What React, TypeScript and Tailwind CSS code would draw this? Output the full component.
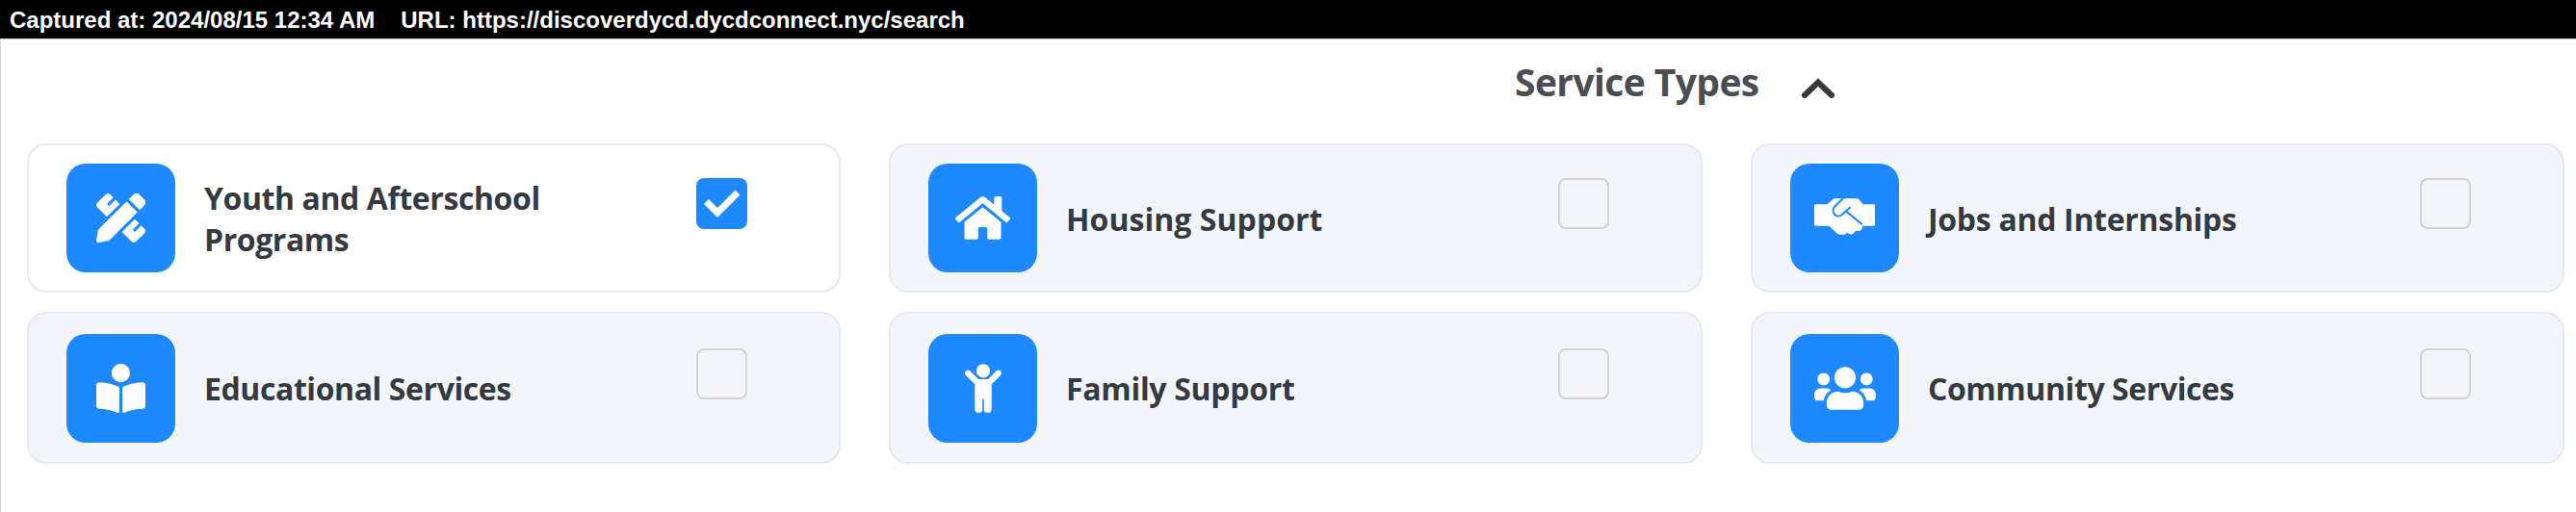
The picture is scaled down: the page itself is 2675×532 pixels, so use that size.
import { useState, type ReactNode } from 'react';
import { FaBookReader, FaChild, FaHome, FaPencilRuler, FaUsers } from 'react-icons/fa';

interface ServiceType {
    id: string;
    label: string;
    icon: ReactNode;
    tracking: string;
}

function Handshake() {
    return (
        <svg viewBox="42 80 190 113" className="mb-[3px] h-[38px] w-[63px]">
            <path
                fill="currentColor"
                d="M46 98H83L100 82Q102 80 105 80H175Q179 80 182 83L195 98H228Q232 98 232 102V162Q232 166 228 166H193Q193 182 178 182Q174 182 171 181Q166 193 156 192Q150 192 146 187Q141 193 134 193H124Q118 193 113 189L88 166H46Q42 166 42 162V102Q42 98 46 98Z"
            />
            <g fill="none" stroke="#1e88ff" strokeWidth="6" strokeLinecap="round">
                <path d="M134 78 107 104C91 122 111 146 130 130L154 108" />
                <path d="M143 121 190 160" />
            </g>
        </svg>
    );
}

const SERVICES: ServiceType[] = [
    { id: 'youth', label: 'Youth and Afterschool Programs', icon: <FaPencilRuler className="size-[51px]" />, tracking: 'tracking-[-0.42px]' },
    { id: 'housing', label: 'Housing Support', icon: <FaHome className="h-[51px] w-[57px]" />, tracking: 'tracking-[0.05px]' },
    { id: 'jobs', label: 'Jobs and Internships', icon: <Handshake />, tracking: 'tracking-[-0.3px]' },
    { id: 'education', label: 'Educational Services', icon: <FaBookReader className="size-[51px]" />, tracking: 'tracking-[-0.42px]' },
    { id: 'family', label: 'Family Support', icon: <FaChild className="h-[51px] w-[38px]" />, tracking: 'tracking-[-0.3px]' },
    { id: 'community', label: 'Community Services', icon: <FaUsers className="h-[51px] w-[64px]" />, tracking: 'tracking-[-0.42px]' },
];

function Checkbox({ checked }: { checked: boolean }) {
    return (
        <span
            className={`mb-[30px] ml-auto flex size-[53px] shrink-0 self-center rounded-lg ${
                checked ? 'bg-[#1e88ff]' : 'border-2 border-[#d3d3d3] bg-[#f3f4fa]'
            }`}
        >
            {checked && (
                <svg viewBox="0 0 53 53" className="size-full" fill="none" stroke="white" strokeWidth="7">
                    <path d="M10.5 24.5 22 36 43 15" />
                </svg>
            )}
        </span>
    );
}

export default function App() {
    const [open, setOpen] = useState(true);
    const [selected, setSelected] = useState<string[]>(['youth']);

    const toggle = (id: string) =>
        setSelected((prev) => (prev.includes(id) ? prev.filter((s) => s !== id) : [...prev, id]));

    return (
        <div className="h-[532px] w-[2675px] overflow-hidden bg-white font-['Open_Sans','Noto_Sans',sans-serif]">
            <div className="flex h-10 items-center gap-[27px] bg-black pt-px pl-[10px] font-['Liberation_Sans',Arial,sans-serif] text-[24px] font-bold text-white">
                <span>Captured at: 2024/08/15 12:34 AM</span>
                <span>URL: https://discoverdycd.dycdconnect.nyc/search</span>
            </div>

            <div className="h-[492px] border-t border-l border-[#d5d5d5]">
                <button
                    onClick={() => setOpen(!open)}
                    className="flex h-[108px] w-full items-start pt-4 pl-[1572px] text-[39px] leading-[56px] font-bold text-[#4a4e52]"
                >
                    <span className="w-[297px] text-left tracking-[-0.6px]">Service Types</span>
                    <svg
                        viewBox="0 0 36 22"
                        className={`mt-6 h-[22px] w-9 ${open ? '' : 'rotate-180'}`}
                        fill="none"
                        stroke="#343a40"
                        strokeWidth="6"
                        strokeLinecap="round"
                    >
                        <path d="M4 18 18 4.5 32 18" strokeLinejoin="miter" />
                    </svg>
                </button>

                {open && (
                    <div className="grid grid-cols-[845px_845px_845px] grid-rows-[155px_158px] gap-x-[50px] gap-y-5 pl-[27px]">
                        {SERVICES.map(({ id, label, icon, tracking }) => {
                            const checked = selected.includes(id);
                            return (
                                <button
                                    key={id}
                                    onClick={() => toggle(id)}
                                    className={`flex rounded-[20px] border-2 border-[#e6e9ee] pr-[95px] pl-[39px] text-left ${
                                        checked ? 'bg-white' : 'bg-[#f2f6fb]'
                                    }`}
                                >
                                    <span className="flex size-[113px] shrink-0 items-center justify-center self-center rounded-[20px] bg-[#1e88ff] text-white">
                                        {icon}
                                    </span>
                                    <span
                                        className={`ml-[30px] w-[400px] self-center pt-px text-[32px] leading-[43px] font-bold text-[#343a40] ${tracking}`}
                                    >
                                        {label}
                                    </span>
                                    <Checkbox checked={checked} />
                                </button>
                            );
                        })}
                    </div>
                )}
            </div>
        </div>
    );
}
